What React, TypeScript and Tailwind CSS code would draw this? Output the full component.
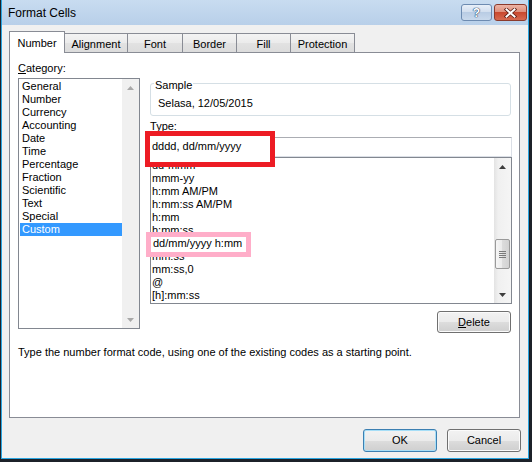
import React from 'react';

const categories = [
  'General',
  'Number',
  'Currency',
  'Accounting',
  'Date',
  'Time',
  'Percentage',
  'Fraction',
  'Scientific',
  'Text',
  'Special',
  'Custom',
];

const formats = [
  'dd-mmm',
  'mmm-yy',
  'h:mm AM/PM',
  'h:mm:ss AM/PM',
  'h:mm',
  'h:mm:ss',
  'dd/mm/yyyy h:mm',
  'mm:ss',
  'mm:ss,0',
  '@',
  '[h]:mm:ss',
];

const tabs = [
  { label: 'Number', w: 'w-[56px]' },
  { label: 'Alignment', w: 'w-[63px]' },
  { label: 'Font', w: 'w-[55px]' },
  { label: 'Border', w: 'w-[54px]' },
  { label: 'Fill', w: 'w-[54px]' },
  { label: 'Protection', w: 'w-[64px]' },
];

const Arrow = ({ up, color }: { up?: boolean; color: string }) => (
  <div className="flex h-[17px] items-center justify-center">
    <svg width="7" height="4" viewBox="0 0 7 4">
      <path d={up ? 'M0 4L3.5 0L7 4Z' : 'M0 0L3.5 4L7 0Z'} fill={color} />
    </svg>
  </div>
);

const WinButton = ({ children, primary }: { children: React.ReactNode; primary?: boolean }) => (
  <button
    className={
      primary
        ? 'h-[23px] w-[74px] rounded-[3px] border border-[#3c7fb1] bg-[linear-gradient(to_bottom,#f2f2f2,#ebebeb_50%,#dddddd_50%,#cfcfcf)] text-[11px] leading-[13px] text-black shadow-[inset_0_0_0_1px_#a6def7]'
        : 'h-[23px] w-[74px] rounded-[3px] border border-[#707070] bg-[linear-gradient(to_bottom,#f2f2f2,#ebebeb_50%,#dddddd_50%,#cfcfcf)] text-[11px] leading-[13px] text-black shadow-[inset_0_0_0_1px_#fbfbfb]'
    }
  >
    {children}
  </button>
);

export default function App() {
  return (
    <div className="h-[462px] w-[532px] bg-[#1c2129] pl-px font-['Liberation_Sans',Arial,sans-serif] text-[11px] leading-[13px] text-black">
      <div className="flex h-[459px] w-[528px] flex-col border-x border-b border-[#2ba6e1]">
        {/* Title bar */}
        <div className="flex h-[25px] shrink-0 items-start bg-[linear-gradient(to_bottom,#c8dcf0,#b8cfe9)]">
          <span className="pl-[6px] pt-[6px] text-[12px] leading-[15px]">Format Cells</span>
          <div className="ml-auto mr-px mt-[4px] flex gap-[2px]">
            <div className="flex h-[17px] w-[31px] items-center justify-center rounded-[3px] border border-[#6d8bb1] bg-[linear-gradient(to_bottom,#e8eff8,#d0ddee_50%,#b9cce4_50%,#c9d9ec)]">
              <span className="text-[12px] leading-[12px] font-bold text-white [text-shadow:0_0_1px_#23436b,0_0_1px_#23436b,0_0_1px_#23436b]">?</span>
            </div>
            <div className="flex h-[17px] w-[33px] items-center justify-center rounded-[3px] border border-[#8b3a2c] bg-[linear-gradient(to_bottom,#ecb4a6,#dd8c78_50%,#c9492f_50%,#d66a50)]">
              <svg width="13" height="10" viewBox="0 0 13 10">
                <path d="M2.5 1.5L10.5 8.5M10.5 1.5L2.5 8.5" stroke="#5b1d13" strokeWidth="3.6" strokeLinecap="square" />
                <path d="M2.5 1.5L10.5 8.5M10.5 1.5L2.5 8.5" stroke="#ffffff" strokeWidth="2" strokeLinecap="square" />
              </svg>
            </div>
          </div>
        </div>

        {/* Body */}
        <div className="flex flex-1 flex-col bg-[#f0f0f0] pl-[7px] pt-[6px]">
          {/* Tabs */}
          <div className="flex h-[21px] items-end">
            {tabs.map((t, i) =>
              i === 0 ? (
                <div
                  key={t.label}
                  className={`${t.w} relative z-10 mb-[-1px] h-[22px] border-x border-t border-[#898c95] bg-white pt-[5px] text-center`}
                >
                  {t.label}
                </div>
              ) : (
                <div
                  key={t.label}
                  className={`${t.w} h-[19px] border-r border-t border-[#898c95] bg-[linear-gradient(to_bottom,#f3f3f3,#ebebeb_50%,#e2e2e2_50%,#dcdcdc)] pt-[4px] text-center`}
                >
                  {t.label}
                </div>
              )
            )}
          </div>

          {/* Panel */}
          <div className="flex h-[366px] w-[511px] flex-col border border-[#898c95] bg-white">
            <div className="flex">
              {/* Category */}
              <div className="ml-[8px] mt-[9px] flex w-[122px] flex-col">
                <div>
                  <span className="underline">C</span>ategory:
                </div>
                <div className="mt-[3px] flex h-[251px] border border-[#828790] bg-white">
                  <div className="flex-1 pl-px pt-px">
                    {categories.map((c) => (
                      <div
                        key={c}
                        className={c === 'Custom' ? 'h-[13px] bg-[#3399ff] pl-[2px] text-white' : 'h-[13px] pl-[2px]'}
                      >
                        {c}
                      </div>
                    ))}
                  </div>
                  <div className="flex w-[17px] flex-col justify-between bg-[#f0f0f0]">
                    <Arrow up color="#a8a8a8" />
                    <Arrow color="#a8a8a8" />
                  </div>
                </div>
              </div>

              {/* Right column */}
              <div className="ml-[10px] flex w-[362px] flex-col">
                <div className="relative mt-[30px] h-[33px] w-[361px] rounded-[3px] border border-[#d5dfe5] pl-[7px] pt-[13px]">
                  <span className="absolute left-[3px] top-[-5px] bg-white px-px">Sample</span>
                  Selasa, 12/05/2015
                </div>

                <div className="mt-[4px]">
                  <span className="underline">T</span>ype:
                </div>

                <div className="relative mt-[4px] h-[20px] border border-[#dbdfe6] border-t-[#abadb3] bg-white">
                  <div className="absolute left-[-6px] top-[-7px] z-10 h-[36px] w-[130px] border-[5px] border-[#ed1c24] bg-white pl-[2px] pt-[4px]">
                    dddd, dd/mm/yyyy
                  </div>
                </div>

                <div className="flex h-[147px] border border-[#828790] bg-white">
                  <div className="flex-1 pl-px pt-px">
                    {formats.map((f) => (
                      <div key={f} className="relative h-[13px]">
                        {f}
                        {f === 'dd/mm/yyyy h:mm' && (
                          <div className="absolute left-[-6px] top-[-5px] z-10 h-[25px] w-[105px] border-[5px] border-[#ffaec9] bg-white pl-[2px]">
                            dd/mm/yyyy h:mm
                          </div>
                        )}
                      </div>
                    ))}
                  </div>
                  <div className="flex w-[17px] flex-col bg-[linear-gradient(to_right,#e3e3e3,#f0f0f0_25%,#f5f5f5)]">
                    <Arrow up color="#3e3e3e" />
                    <div className="flex-1 pt-[64px]">
                      <div className="mx-px flex h-[30px] flex-col items-center justify-center gap-px rounded-[2px] border border-[#9a9a9a] bg-[linear-gradient(to_right,#f6f6f6,#eaeaea_50%,#dcdcdc_50%,#d2d2d2)]">
                        <div className="h-px w-[7px] bg-[#7a7a7a]" />
                        <div className="h-px w-[7px] bg-[#7a7a7a]" />
                        <div className="h-px w-[7px] bg-[#7a7a7a]" />
                        <div className="h-px w-[7px] bg-[#7a7a7a]" />
                      </div>
                    </div>
                    <Arrow color="#3e3e3e" />
                  </div>
                </div>

                <div className="mr-px mt-[7px] flex justify-end">
                  <button className="h-[22px] w-[74px] rounded-[3px] border border-[#707070] bg-[linear-gradient(to_bottom,#f2f2f2,#ebebeb_50%,#dddddd_50%,#cfcfcf)] text-[11px] leading-[13px] shadow-[inset_0_0_0_1px_#fbfbfb]">
                    <span className="underline">D</span>elete
                  </button>
                </div>
              </div>
            </div>

            <div className="ml-[8px] mt-[13px]">
              Type the number format code, using one of the existing codes as a starting point.
            </div>
          </div>

          {/* Buttons */}
          <div className="mt-[11px] flex justify-end gap-[10px] pr-[7px]">
            <WinButton primary>OK</WinButton>
            <WinButton>Cancel</WinButton>
          </div>
        </div>
      </div>
    </div>
  );
}
